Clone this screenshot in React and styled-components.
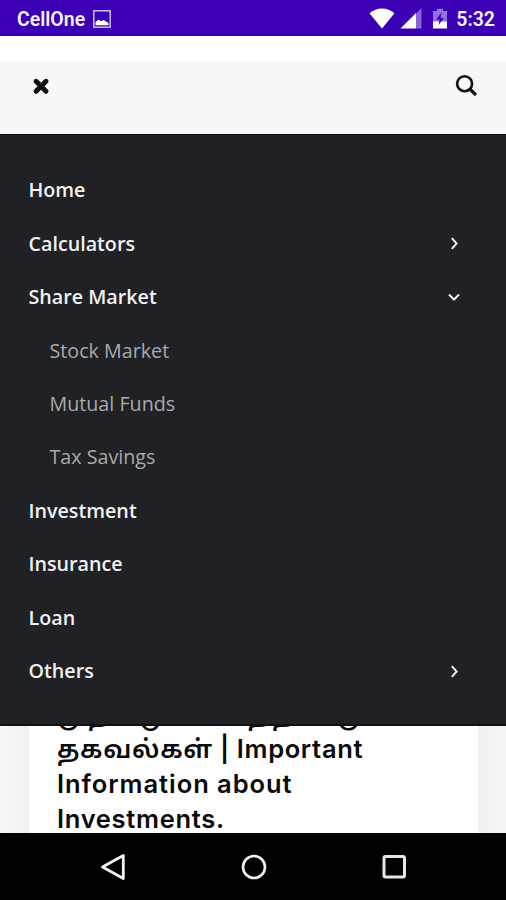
import React from "react";
import styled, { createGlobalStyle } from "styled-components";

const GlobalStyle = createGlobalStyle`
  * {
    box-sizing: border-box;
    margin: 0;
    padding: 0;
  }
`;

const Screen = styled.div`
  display: flex;
  flex-direction: column;
  width: 506px;
  height: 900px;
  overflow: hidden;
  background-color: #ffffff;
  font-family: "Open Sans", "Noto Sans", sans-serif;
`;

const StatusBar = styled.header`
  display: flex;
  flex: none;
  align-items: center;
  justify-content: space-between;
  height: 36px;
  padding: 2px 11px 0 17px;
  border-bottom: solid 1px #2700a0;
  background-color: #3b00b4;
  color: #f6f2ff;
  font-family: Roboto, sans-serif;
`;

const StatusGroup = styled.div`
  display: flex;
  align-items: center;
`;

const Carrier = styled.span`
  margin-right: 8px;
  padding-top: 1px;
  font-size: 19.5px;
  font-weight: 600;
`;

const Clock = styled.span`
  margin-left: 9px;
  padding-top: 1px;
  font-size: 19.5px;
  font-weight: 600;
`;

const StatusIcon = styled.svg`
  display: block;
  margin-left: ${(props) => props.$gap || 0}px;
`;

const TopBar = styled.div`
  display: flex;
  flex: none;
  justify-content: space-between;
  height: 73px;
  margin-top: 25px;
  padding: 13px 28px 0 32px;
  background-color: #f7f7f7;
`;

const IconButton = styled.button`
  display: block;
  height: 24px;
  border: none;
  background: none;
  cursor: pointer;

  svg {
    display: block;
  }
`;

const Menu = styled.nav`
  flex: none;
  height: 592px;
  padding-top: 28px;
  border-top: solid 1px #0c0c0e;
  border-bottom: solid 2px #101113;
  background-color: #202124;
`;

const MenuItem = styled.a`
  display: flex;
  align-items: center;
  justify-content: space-between;
  height: 53.45px;
  padding: 0 44px 0 ${(props) => (props.$sub ? 49.5 : 28.5)}px;
  color: ${(props) => (props.$sub ? "#a9aaac" : "#f1f1f1")};
  font-size: 19.7px;
  font-weight: ${(props) => (props.$sub ? 400 : 600)};
  cursor: pointer;
`;

const Article = styled.main`
  flex: 1;
  min-height: 0;
  padding: 0 28px 0 29px;
  overflow: hidden;
  background: linear-gradient(to right, #f8f8f8 0, #f0f0f0 28px, #f0f0f0 478px, #f5f5f5 506px);
`;

const Card = styled.div`
  display: flex;
  flex-direction: column;
  justify-content: flex-end;
  height: 100%;
  padding: 0 28px;
  background-color: #ffffff;
`;

const Title = styled.h1`
  flex: none;
  margin-bottom: -3px;
  color: #0b0b0b;
  font-family: Inter, "Noto Sans Tamil", "Noto Sans", sans-serif;
  font-size: 25.5px;
  font-weight: 600;
  line-height: 35px;
  white-space: nowrap;
`;

const TitleLine = styled.span`
  display: block;
  letter-spacing: ${(props) => props.$spacing}px;
`;

const NavBar = styled.footer`
  display: flex;
  flex: none;
  align-items: center;
  justify-content: space-between;
  height: 67px;
  padding: 0 98px 0 99px;
  border-top: solid 1px #000000;
  background-color: #000000;
`;

const items = [
  { label: "Home" },
  { label: "Calculators", arrow: "right" },
  { label: "Share Market", arrow: "down" },
  { label: "Stock Market", sub: true },
  { label: "Mutual Funds", sub: true },
  { label: "Tax Savings", sub: true },
  { label: "Investment" },
  { label: "Insurance" },
  { label: "Loan" },
  { label: "Others", arrow: "right" }
];

const titleLines = [
  { text: "முதலீடுகள் பற்றிய முக்கிய", spacing: 0.5 },
  { text: "தகவல்கள் | Important", spacing: 0.65 },
  { text: "Information about", spacing: 0.95 },
  { text: "Investments.", spacing: 0.7 }
];

const Arrow = ({ direction }) => (
  <svg width="16" height="16" viewBox="0 0 16 16" fill="none" stroke="#ededed" strokeWidth="2">
    <path d={direction === "down" ? "M3 5.5L8 10.5L13 5.5" : "M5.8 3.2L10.6 8.5L5.8 13.8"} />
  </svg>
);

class App extends React.Component {
  render() {
    return (
      <Screen>
        <GlobalStyle />

        <StatusBar>
          <StatusGroup>
            <Carrier>CellOne</Carrier>
            <StatusIcon width="18" height="18" viewBox="0 0 18 18">
              <rect x="0.8" y="0.8" width="16.4" height="16.4" fill="none" stroke="#d9ccf6" strokeWidth="1.4" />
              <path d="M2.5 15.2V12L5.5 9.5L8 11.2L10.5 10L15.5 13V15.2Z" fill="#fff" />
            </StatusIcon>
          </StatusGroup>
          <StatusGroup>
            <StatusIcon width="26" height="21" viewBox="0 0 26 21">
              <path d="M0.5 5.2C7.5-1.2 18.5-1.2 25.5 5.2L13 20.5Z" fill="#fff" />
            </StatusIcon>
            <StatusIcon $gap={5} width="22" height="21" viewBox="0 0 22 21">
              <path d="M21.5 0V20.5H15V6.5Z" fill="#8a63d6" />
              <path d="M0.5 20.5L16 5V20.5Z" fill="#fff" />
            </StatusIcon>
            <StatusIcon $gap={11} width="14" height="21" viewBox="0 0 14 21">
              <path d="M0 3H4V0.8H10V3H14V14H0Z" fill="#9670dc" />
              <path d="M0 13.5H14V20.5H0Z" fill="#fff" />
              <path d="M8.5 4.5L3 11.5H6.5L5.5 17L11 10H7.5Z" fill="#3b00b4" />
            </StatusIcon>
            <Clock>5:32</Clock>
          </StatusGroup>
        </StatusBar>

        <TopBar>
          <IconButton aria-label="Close menu">
            <svg width="18" height="24" viewBox="0 0 18 24" stroke="#111" strokeWidth="5" strokeLinecap="round">
              <path d="M4.1 7.3L14 17.3M14 7.3L4.1 17.3" />
            </svg>
          </IconButton>
          <IconButton aria-label="Search">
            <svg width="23" height="24" viewBox="0 0 23 24" fill="none" stroke="#111">
              <circle cx="9.6" cy="9.7" r="7.5" strokeWidth="2.6" />
              <path d="M14.8 15L21 21" strokeWidth="3.2" />
            </svg>
          </IconButton>
        </TopBar>

        <Menu>
          {items.map((item) => (
            <MenuItem key={item.label} $sub={item.sub}>
              <span>{item.label}</span>
              {item.arrow && <Arrow direction={item.arrow} />}
            </MenuItem>
          ))}
        </Menu>

        <Article>
          <Card>
            <Title>
              {titleLines.map((line) => (
                <TitleLine key={line.text} $spacing={line.spacing}>
                  {line.text}
                </TitleLine>
              ))}
            </Title>
          </Card>
        </Article>

        <NavBar>
          <svg width="28" height="30" viewBox="0 0 28 30" fill="none" stroke="#f2f2f2" strokeWidth="2.8">
            <path d="M24.3 3.5V26.5L3.5 15Z" strokeLinejoin="round" />
          </svg>
          <svg width="28" height="28" viewBox="0 0 28 28" fill="none" stroke="#f2f2f2" strokeWidth="2.6">
            <circle cx="14" cy="14" r="11" />
          </svg>
          <svg width="28" height="28" viewBox="0 0 28 28" fill="none" stroke="#e6e6e6" strokeWidth="3">
            <rect x="4" y="3.5" width="20.5" height="20.5" rx="1.5" />
          </svg>
        </NavBar>
      </Screen>
    );
  }
}

export default App;
